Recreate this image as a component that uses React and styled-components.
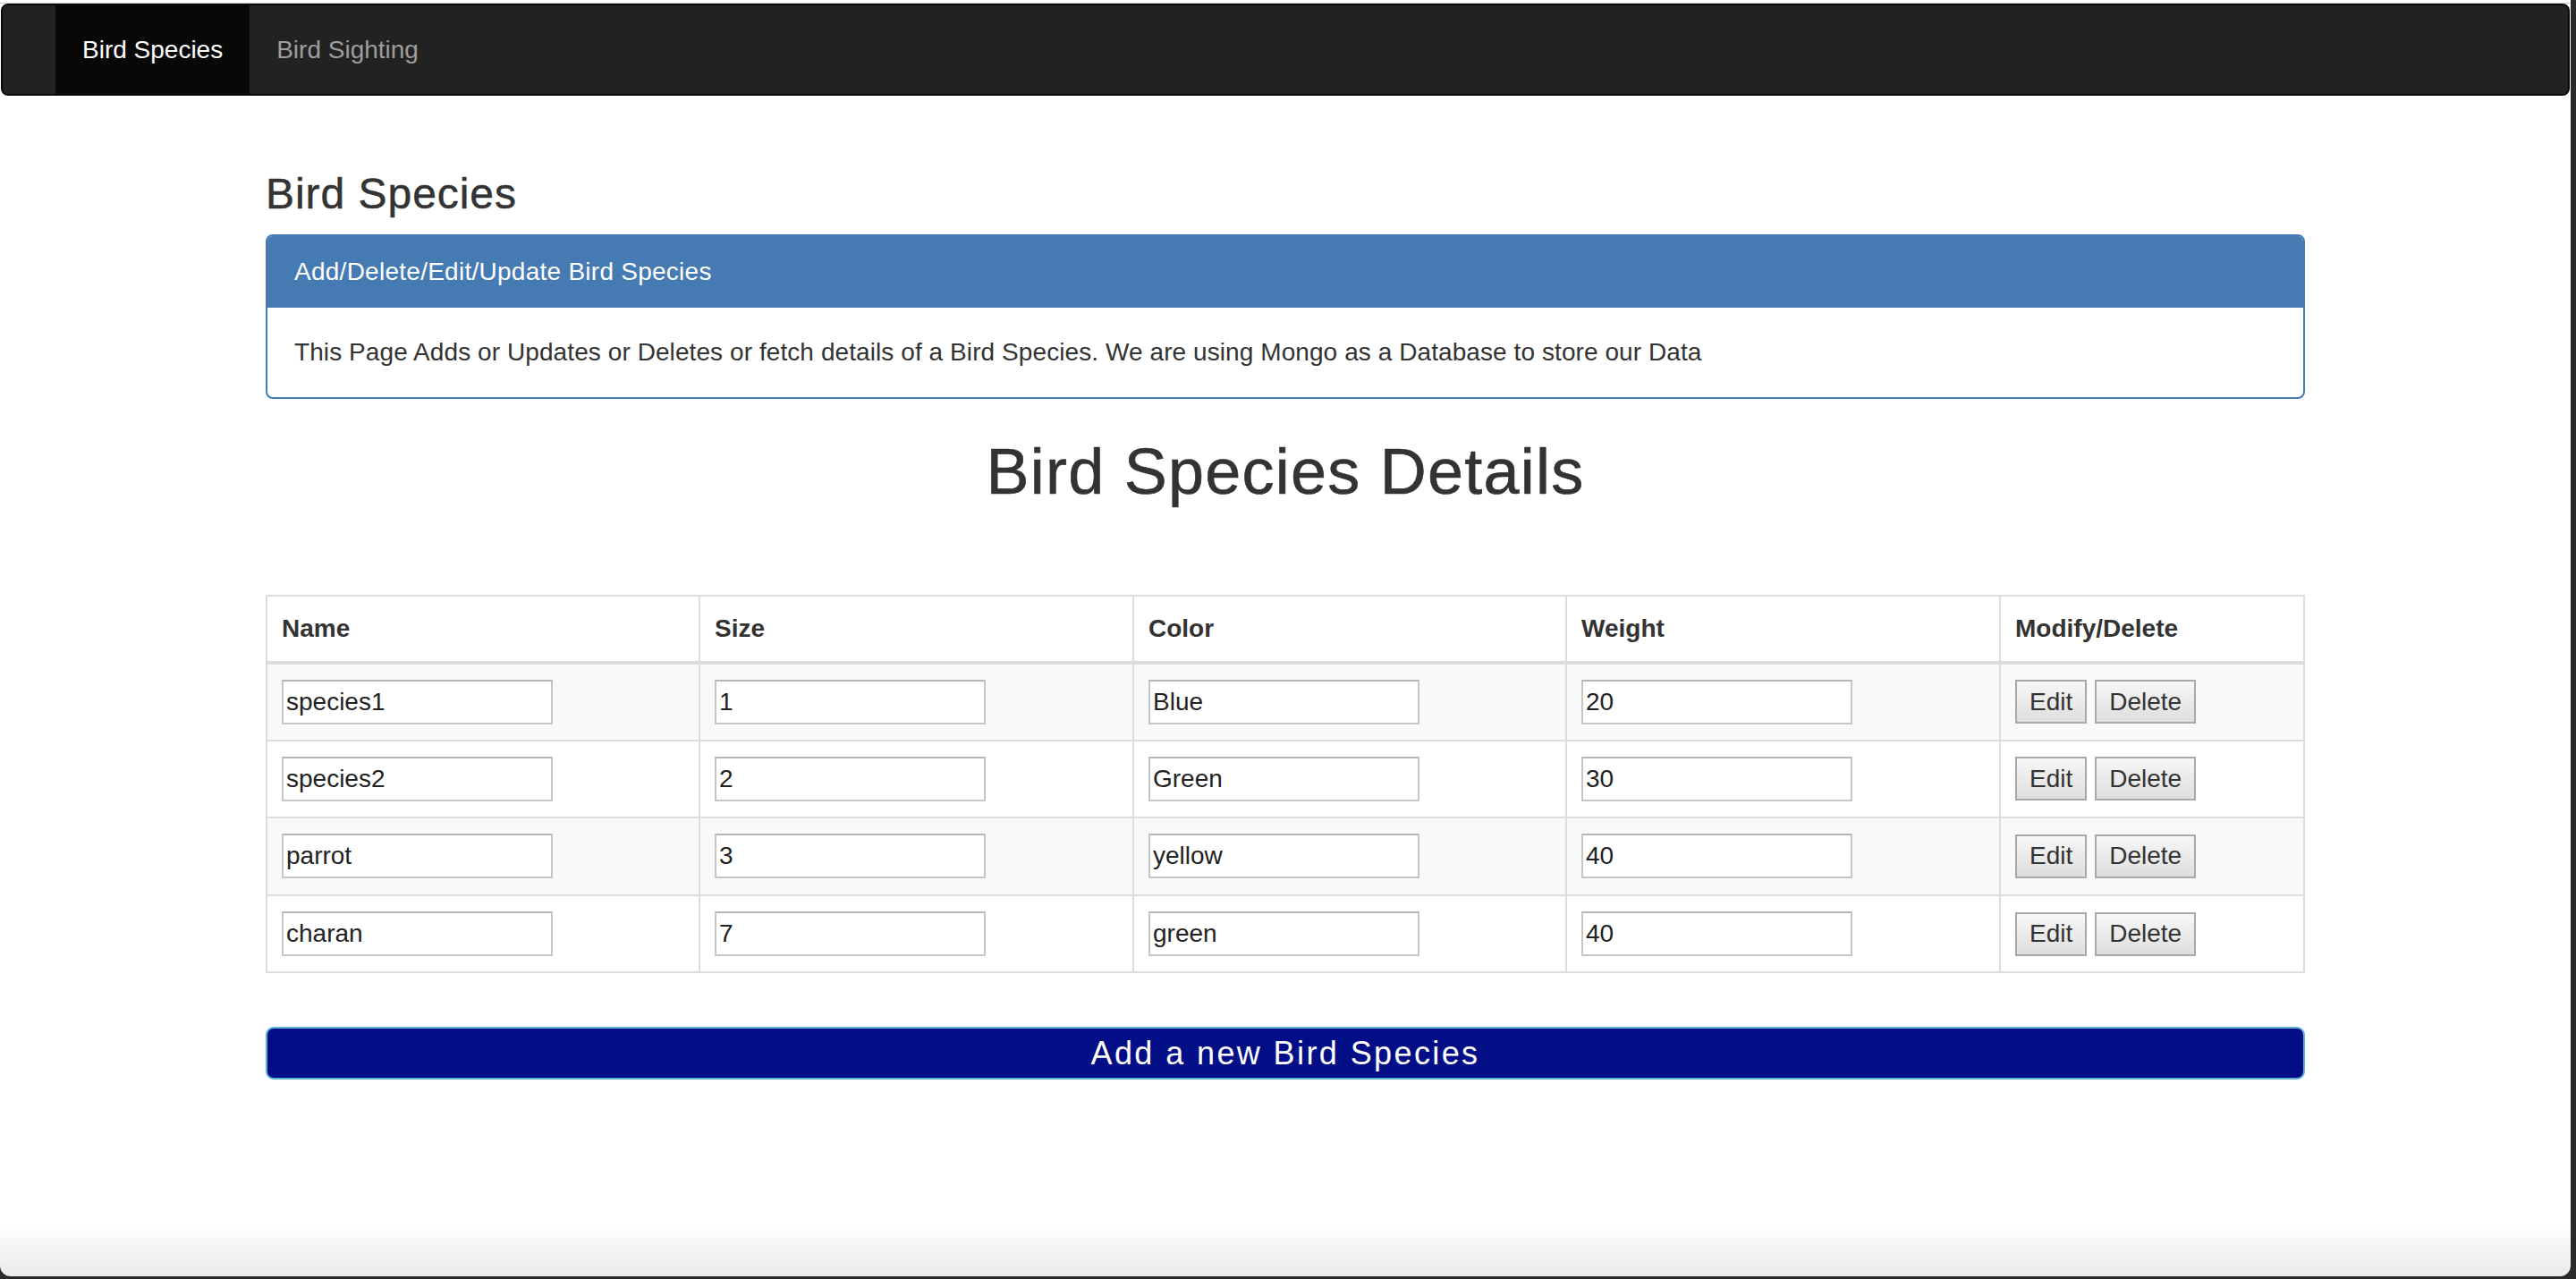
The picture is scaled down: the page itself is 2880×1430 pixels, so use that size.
import React from "react"
import styled, { createGlobalStyle } from "styled-components"

const GlobalStyle = createGlobalStyle`
  * {
    box-sizing: border-box;
  }

  html,
  body {
    margin: 0;
    padding: 0;
    background: #2a2a2a;
  }

  body {
    font-family: "Liberation Sans", Arial, sans-serif;
    font-size: 28px;
    line-height: 40px;
    color: #333;
  }
`

const Window = styled.div`
  width: 2874px;
  height: 1427px;
  background: linear-gradient(to bottom, #fff calc(100% - 62px), #ebebeb 100%);
  border-radius: 0 0 12px 12px;
  overflow: hidden;
`

const TopEdge = styled.div`
  height: 4px;
  border-bottom: 1px solid #d0d0d0;
`

const Navbar = styled.nav`
  display: flex;
  height: 103px;
  margin: 0 1px;
  padding-left: 59px;
  background: #222;
  border: 2px solid #080808;
  border-radius: 8px;
`

const NavLink = styled.a`
  display: flex;
  align-items: center;
  padding: 0 30px;
  color: ${({ active }) => (active ? "#fff" : "#9d9d9d")};
  background: ${({ active }) => (active ? "#080808" : "transparent")};
  text-decoration: none;
  cursor: pointer;
`

const Container = styled.div`
  width: 2340px;
  margin: 0 auto;
  padding: 0 30px;
`

const PageTitle = styled.h3`
  margin: 84px 0 18px;
  font-size: 48px;
  line-height: 52.8px;
  font-weight: 500;
  letter-spacing: 0.02em;
  -webkit-text-stroke: 0.5px currentColor;
`

const Panel = styled.section`
  border: 2px solid #457ab3;
  border-radius: 8px;
  overflow: hidden;
`

const PanelHeading = styled.div`
  padding: 20px 30px;
  background: #457ab3;
  color: #fff;
  letter-spacing: 0.26px;
`

const PanelBody = styled.div`
  padding: 30px;
  letter-spacing: 0.08px;
`

const Heading = styled.h1`
  margin: 42px 0 98px;
  text-align: center;
  font-size: 72px;
  line-height: 79.2px;
  font-weight: 500;
  letter-spacing: 0.017em;
  -webkit-text-stroke: 0.6px currentColor;
`

const Table = styled.table`
  width: 100%;
  border-collapse: collapse;
  border: 2px solid #ddd;
`

const Th = styled.th`
  padding: 16px;
  text-align: left;
  font-weight: 700;
  border: 2px solid #ddd;
  border-bottom-width: 4px;
  width: ${({ w }) => w || "auto"};
`

const Row = styled.tr`
  background: ${({ striped }) => (striped ? "#f9f9f9" : "#fff")};
`

const Td = styled.td`
  height: 86.6px;
  padding: 0 16px;
  vertical-align: middle;
  border: 2px solid #ddd;
`

const Field = styled.input`
  display: block;
  width: 303px;
  height: 50px;
  padding: 0 3px;
  font: inherit;
  color: #222;
  background: #fff;
  border: 2px solid #c6c6c6;
  border-top-color: #b5b5b5;
  outline: none;
`

const Actions = styled.div`
  display: flex;
  gap: 9px;
`

const SmallButton = styled.button`
  height: 49px;
  padding: 0 14px;
  font: inherit;
  color: #333;
  background: linear-gradient(to bottom, #f7f7f7, #dedede);
  border: 2px solid #a9a9a9;
  border-radius: 0;
  cursor: pointer;
`

const AddButton = styled.button`
  display: block;
  width: 100%;
  height: 59px;
  margin-top: 60px;
  padding: 0;
  font-family: "Liberation Sans", Arial, sans-serif;
  font-size: 36px;
  letter-spacing: 2.4px;
  color: #fff;
  background: #010e86;
  border: 2px solid #5bb1d8;
  border-radius: 9px;
  cursor: pointer;
`

const birds = [
  { name: "species1", size: "1", color: "Blue", weight: "20" },
  { name: "species2", size: "2", color: "Green", weight: "30" },
  { name: "parrot", size: "3", color: "yellow", weight: "40" },
  { name: "charan", size: "7", color: "green", weight: "40" },
]

export default function App() {
  return (
    <Window>
      <GlobalStyle />
      <TopEdge />
      <Navbar>
        <NavLink active>Bird Species</NavLink>
        <NavLink>Bird Sighting</NavLink>
      </Navbar>
      <Container>
        <PageTitle>Bird Species</PageTitle>
        <Panel>
          <PanelHeading>Add/Delete/Edit/Update Bird Species</PanelHeading>
          <PanelBody>
            This Page Adds or Updates or Deletes or fetch details of a Bird
            Species. We are using Mongo as a Database to store our Data
          </PanelBody>
        </Panel>
        <Heading>Bird Species Details</Heading>
        <Table>
          <thead>
            <tr>
              <Th w="484px">Name</Th>
              <Th w="485px">Size</Th>
              <Th w="484px">Color</Th>
              <Th w="485px">Weight</Th>
              <Th>Modify/Delete</Th>
            </tr>
          </thead>
          <tbody>
            {birds.map((b, i) => (
              <Row key={b.name} striped={i % 2 === 0}>
                <Td>
                  <Field defaultValue={b.name} />
                </Td>
                <Td>
                  <Field defaultValue={b.size} />
                </Td>
                <Td>
                  <Field defaultValue={b.color} />
                </Td>
                <Td>
                  <Field defaultValue={b.weight} />
                </Td>
                <Td>
                  <Actions>
                    <SmallButton>Edit</SmallButton>
                    <SmallButton>Delete</SmallButton>
                  </Actions>
                </Td>
              </Row>
            ))}
          </tbody>
        </Table>
        <AddButton>Add a new Bird Species</AddButton>
      </Container>
    </Window>
  )
}
